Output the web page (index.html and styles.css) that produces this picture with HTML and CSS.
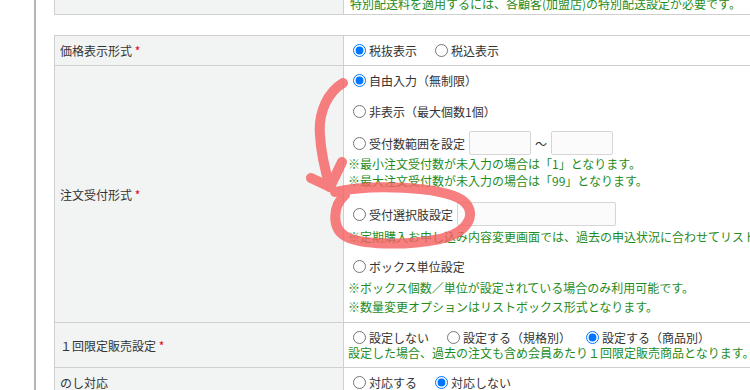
FILE: index.html
```html
<!DOCTYPE html>
<html lang="ja">
<head>
	<meta charset="UTF-8" />
	<meta name="viewport" content="width=device-width, initial-scale=1.0" />
	<title>商品登録</title>
	<link rel="stylesheet" href="styles.css">
</head>
<body>
	<div class="page">
		<table class="form form-prev">
			<colgroup><col class="c-label"><col></colgroup>
			<tr>
				<th></th>
				<td class="note">特別配送料を適用するには、各顧客(加盟店)の特別配送設定が必要です。</td>
			</tr>
		</table>

		<table class="form form-main">
			<colgroup><col class="c-label"><col></colgroup>
			<tr>
				<th>価格表示形式 <span class="req">*</span></th>
				<td>
					<div class="opts">
						<label class="opt"><input type="radio" name="tax" checked>税抜表示</label>
						<label class="opt"><input type="radio" name="tax">税込表示</label>
					</div>
				</td>
			</tr>
			<tr>
				<th>注文受付形式 <span class="req">*</span></th>
				<td class="multi">
					<div class="line"><label class="opt"><input type="radio" name="order" checked>自由入力（無制限）</label></div>
					<div class="line l2"><label class="opt"><input type="radio" name="order">非表示（最大個数1個）</label></div>
					<div class="line l3">
						<label class="opt"><input type="radio" name="order">受付数範囲を設定</label>
						<input type="text" class="txt num"><span class="tilde">～</span><input type="text" class="txt num">
					</div>
					<p class="note">※最小注文受付数が未入力の場合は「1」となります。<br>※最大注文受付数が未入力の場合は「99」となります。</p>
					<div class="line l4">
						<label class="opt"><input type="radio" name="order">受付選択肢設定</label>
						<input type="text" class="txt choice">
					</div>
					<p class="note n4">※定期購入お申し込み内容変更画面では、過去の申込状況に合わせてリストボックスで表示されます。</p>
					<div class="line l5"><label class="opt"><input type="radio" name="order">ボックス単位設定</label></div>
					<p class="note n5">※ボックス個数／単位が設定されている場合のみ利用可能です。</p>
					<p class="note n6">※数量変更オプションはリストボックス形式となります。</p>
				</td>
			</tr>
			<tr>
				<th>１回限定販売設定 <span class="req">*</span></th>
				<td>
					<div class="opts">
						<label class="opt"><input type="radio" name="once">設定しない</label>
						<label class="opt tight"><input type="radio" name="once">設定する（規格別）</label>
						<label class="opt"><input type="radio" name="once" checked>設定する（商品別）</label>
					</div>
					<p class="note">設定した場合、過去の注文も含め会員あたり１回限定販売商品となります。</p>
				</td>
			</tr>
			<tr>
				<th>のし対応</th>
				<td>
					<div class="opts">
						<label class="opt"><input type="radio" name="noshi">対応する</label>
						<label class="opt"><input type="radio" name="noshi" checked>対応しない</label>
					</div>
				</td>
			</tr>
		</table>
	</div>

	<!-- 手書きの注釈 -->
	<svg class="mark" width="750" height="390" viewBox="0 0 750 390">
		<g fill="none" stroke="#f66060" stroke-width="10" stroke-linecap="round" stroke-linejoin="round">
			<path d="M343 83 C 328 92, 318 112, 320 135 C 321 155, 325 170, 330 187" />
			<path d="M311 178 L330 187 L342 162" />
			<path d="M335 192 C 370 184, 440 186, 462 200 C 478 212, 470 232, 440 239 C 405 246, 360 245, 345 236 C 332 228, 332 206, 345 195" />
		</g>
	</svg>
</body>
</html>
```

FILE: styles.css
```css
*{box-sizing: border-box;}
body{
	margin: 0;
	position: relative;
	overflow: hidden;
	background: #fff;
	color: #333;
	font-family: "Noto Sans CJK JP", "Liberation Sans", sans-serif;
	font-size: 12px;
}
.page{
	display: flow-root;
	margin-left: 34px;
	padding-left: 18px;
	border-left: 2px solid #b4b4b4;
	min-height: 390px;
}

.form{border-collapse: collapse;table-layout: fixed;width: 1000px;}
.form .c-label{width: 289px;}
.form th,.form td{
	border: 1px solid #cfcfcf;
	padding: 7px 4px;
	line-height: 15px;
	text-align: left;
	font-weight: normal;
	vertical-align: middle;
	white-space: nowrap;
}
.form th{background: #f2f3f3;padding-left: 5px;}
.form-prev{margin-top: -12px;}
.form-prev td{padding: 7px 6px 3px;}
.form-main{margin-top: 20px;}

.req{color: #e60012;}
.note{margin: 0;color: #1e8c1e;}

.opts{display: flex;align-items: center;}
.opt{display: inline-flex;align-items: center;margin-right: 13px;}
.opt.tight{margin-right: 10px;}
.opt input{width: 13px;height: 13px;margin: 0 3px 0 5px;}

/* 注文受付形式 */
.multi{padding-bottom: 2px;}
.multi .note{line-height: 17px;}
.line{display: flex;align-items: center;min-height: 15px;}
.line .opt{margin-right: 4px;}
.l2{margin-top: 16px;}
.l3{margin-top: 12px;}
.l4{margin-top: 13px;}
.l5{margin-top: 14px;}
.n4{margin-top: 2px;}
.n5{margin-top: 5px;}
.n6{margin-top: 2px;}

.txt{
	height: 24px;
	border: 1px solid #d6d6d6;
	border-radius: 2px;
	background: #fbfbfb;
	padding: 2px 4px;
}
.num{width: 62px;}
.choice{width: 159px;}
.tilde{margin: 0 4px;}

.mark{position: absolute;left: 0;top: 0;pointer-events: none;opacity: .8;}
```
